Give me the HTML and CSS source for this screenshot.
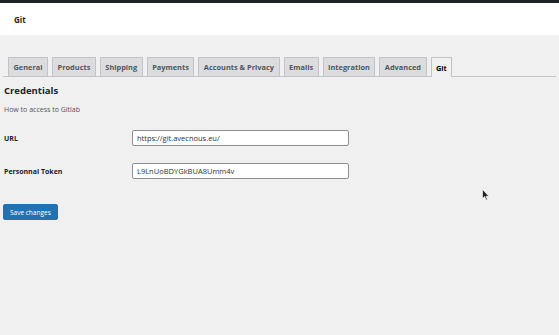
FILE: index.html
```html
<!DOCTYPE html>
<html lang="en">
<head>
    <meta charset="UTF-8">
    <title>Git settings</title>
    <link rel="stylesheet" href="styles.css">
</head>
<body>
    <div class="admin-bar"></div>
    <div class="page-header">
        <h1>Git</h1>
    </div>

    <div class="wrap">
        <nav class="tabs">
            <a class="tab">General</a>
            <a class="tab">Products</a>
            <a class="tab">Shipping</a>
            <a class="tab">Payments</a>
            <a class="tab">Accounts &amp; Privacy</a>
            <a class="tab">Emails</a>
            <a class="tab">Integration</a>
            <a class="tab">Advanced</a>
            <a class="tab active">Git</a>
        </nav>

        <h2>Credentials</h2>
        <p class="desc">How to access to Gitlab</p>

        <div class="form-row">
            <label for="url">URL</label>
            <input type="text" id="url" value="https://git.avecnous.eu/">
        </div>
        <div class="form-row">
            <label for="token">Personnal Token</label>
            <input type="text" id="token" value="L9LnUoBDYGkBUA8Umm4v">
        </div>

        <button class="save">Save changes</button>
    </div>

    <svg class="cursor" width="8" height="12" viewBox="0 0 8 12">
        <path d="M0.5 0.5 L0.5 9.5 L2.6 7.6 L4.2 11 L5.4 10.4 L3.9 7.2 L6.8 7.2 Z" fill="#222" stroke="#fff" stroke-width="0.6"/>
    </svg>
</body>
</html>
```

FILE: styles.css
```css
body {
    margin: 0;
    background-color: #f0f0f1;
    font-family: "Open Sans", "Noto Sans", sans-serif;
    color: #1d2327;
    height: 335px;
    overflow: hidden;
    position: relative;
}

.admin-bar {
    height: 3px;
    background-color: #1d2327;
}

.page-header {
    height: 32px;
    background-color: #fff;
    display: flex;
    align-items: center;
    padding-left: 14px;
}

.page-header h1 {
    margin: 0;
    font-size: 8px;
    font-weight: 700;
}

.wrap {
    padding: 22px 3px 0 3px;
}

.tabs {
    display: flex;
    gap: 4px;
    padding-left: 5px;
    border-bottom: 1px solid #c3c4c7;
    height: 19px;
}

.tab {
    display: flex;
    align-items: center;
    padding: 0 4.5px;
    height: 18px;
    background-color: #dcdcde;
    border: 1px solid #c3c4c7;
    border-bottom: none;
    font-size: 7.4px;
    font-weight: 700;
    color: #50575e;
}

.tab.active {
    background-color: #f0f0f1;
    color: #000;
    height: 19px;
    margin-bottom: -1px;
}

h2 {
    margin: 7px 0 0 1px;
    font-size: 9.5px;
    font-weight: 700;
}

.desc {
    margin: 8px 0 0 1px;
    font-size: 7px;
    color: #50575e;
}

.form-row {
    display: flex;
    align-items: center;
    margin-top: 16px;
}

.form-row + .form-row {
    margin-top: 17px;
}

.form-row label {
    width: 128px;
    padding-left: 1px;
    font-size: 7px;
    font-weight: 700;
}

.form-row input {
    width: 217px;
    height: 16px;
    box-sizing: border-box;
    border: 1px solid #8c8f94;
    border-radius: 2px;
    padding: 0 4px;
    font-family: inherit;
    font-size: 7.5px;
    color: #2c3338;
    background-color: #fff;
}

.save {
    margin-top: 25px;
    height: 16px;
    padding: 0 6px;
    background-color: #2271b1;
    color: #fff;
    border: 1px solid #2271b1;
    border-radius: 2px;
    font-family: inherit;
    font-size: 6.5px;
}

.cursor {
    position: absolute;
    left: 482px;
    top: 189px;
}
```
